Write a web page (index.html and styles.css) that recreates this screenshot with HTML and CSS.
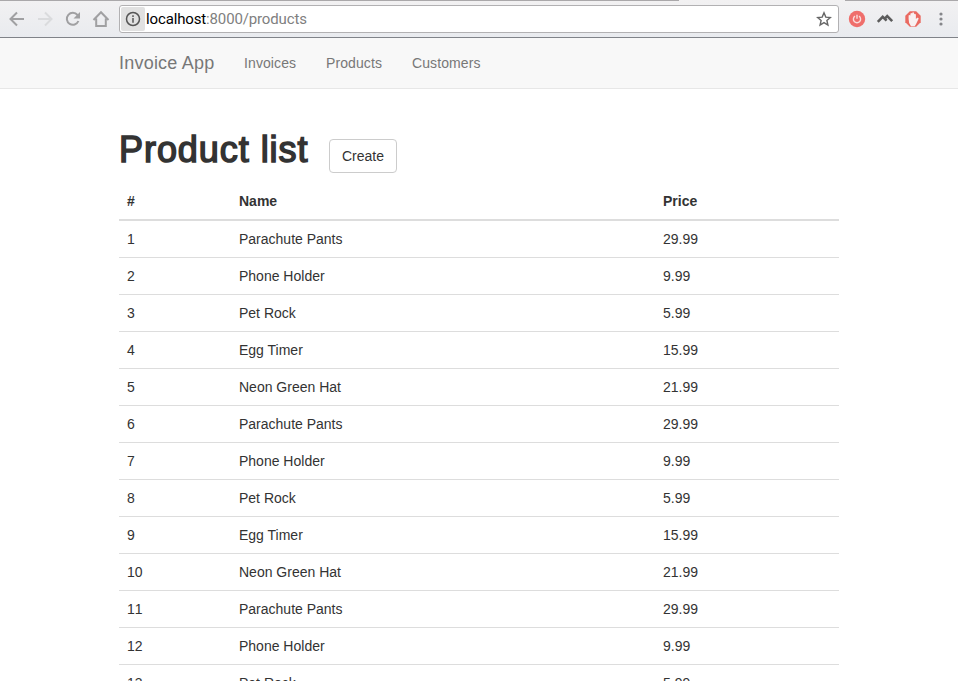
FILE: index.html
```html
<!DOCTYPE html>
<html lang="en">
<head>
<meta charset="utf-8">
<title>Invoice App</title>
<link rel="stylesheet" href="styles.css">
</head>
<body>
<div class="browser">
  <div class="tab-edge"><span class="edge-left"></span><span class="edge-right"></span></div>
  <div class="toolbar">
    <svg class="tool" viewBox="0 0 18 18"><path d="M16 9H3M9 2.500L2.500 9L9 15.500" /></svg>
    <svg class="tool tool-off" viewBox="0 0 18 18"><path d="M2 9H15M9 2.500L15.500 9L9 15.500" /></svg>
    <svg class="tool" viewBox="0 0 18 18"><path d="M14.400 11A6 6 0 1 1 13.500 5L15 6.600" /><path class="solid" d="M16 2V8.500H9.500Z" /></svg>
    <svg class="tool" viewBox="0 0 18 18"><path d="M1.500 10L9 2.300L16.500 10M4.200 8.500V16H13.800V8.500" /></svg>
    <div class="address">
      <span class="info"><svg viewBox="0 0 16 16"><circle cx="8" cy="8" r="6.500" /><path d="M8 7V11.700M8 4.300V5.900" /></svg></span>
      <span class="url">localhost<span class="path">:8000/products</span></span>
      <svg class="star" viewBox="0 0 16 16"><path d="M8 1.800L9.800 6.100L14.300 6.500L10.900 9.500L11.900 14L8 11.600L4.100 14L5.100 9.500L1.700 6.500L6.200 6.100Z" /></svg>
    </div>
    <svg class="ext" viewBox="0 0 18 18"><circle cx="9" cy="9" r="8.200" fill="#ef6e6b" /><path d="M7 6.200A3.600 3.600 0 1 0 11 6.200M9 4.800V8.800" fill="none" stroke="#fbdcdb" stroke-width="1.400" /></svg>
    <svg class="ext" viewBox="0 0 18 18"><path d="M1.800 11.800L6.700 6.800L10.600 10.700M7.800 9.600L11.200 6.200L16.200 11.200" fill="none" stroke="#5c5c5c" stroke-width="2.600" /></svg>
    <svg class="ext" viewBox="0 0 18 18"><path d="M5.800 1.300H12.200L16.700 5.800V12.200L12.200 16.700H5.800L1.300 12.200V5.800Z" fill="#ea6a61" /><path d="M4.600 9V5.500Q5.500 4.300 6.400 5.500V3.700Q7.300 2.400 8.200 3.500V2.900Q9.200 1.700 10.100 3.100V4.200Q11.200 3.300 11.900 4.700V9L13.200 7.800Q14.700 7.400 14.600 8.800L12 14.300L10.700 16.200H7Q4.500 13.500 4.600 9Z" fill="#f8f1f1" /></svg>
    <svg class="menu" viewBox="0 0 6 18"><circle cx="3" cy="4" r="1.600" /><circle cx="3" cy="9" r="1.600" /><circle cx="3" cy="14" r="1.600" /></svg>
  </div>
</div>
<nav class="navbar">
  <a class="brand">Invoice App</a>
  <a class="link invoices">Invoices</a>
  <a class="link products">Products</a>
  <a class="link">Customers</a>
</nav>
<main class="container">
  <header class="heading"><h1>Product list</h1><button class="create">Create</button></header>
  <table>
    <colgroup><col class="col-id"><col class="col-name"><col></colgroup>
    <thead><tr><th>#</th><th>Name</th><th>Price</th></tr></thead>
    <tbody>
      <tr><td>1</td><td>Parachute Pants</td><td>29.99</td></tr>
      <tr><td>2</td><td>Phone Holder</td><td>9.99</td></tr>
      <tr><td>3</td><td>Pet Rock</td><td>5.99</td></tr>
      <tr><td>4</td><td>Egg Timer</td><td>15.99</td></tr>
      <tr><td>5</td><td>Neon Green Hat</td><td>21.99</td></tr>
      <tr><td>6</td><td>Parachute Pants</td><td>29.99</td></tr>
      <tr><td>7</td><td>Phone Holder</td><td>9.99</td></tr>
      <tr><td>8</td><td>Pet Rock</td><td>5.99</td></tr>
      <tr><td>9</td><td>Egg Timer</td><td>15.99</td></tr>
      <tr><td>10</td><td>Neon Green Hat</td><td>21.99</td></tr>
      <tr><td>11</td><td>Parachute Pants</td><td>29.99</td></tr>
      <tr><td>12</td><td>Phone Holder</td><td>9.99</td></tr>
      <tr><td>13</td><td>Pet Rock</td><td>5.99</td></tr>
    </tbody>
  </table>
</main>
</body>
</html>
```
FILE: styles.css
```css
* { box-sizing: border-box; }
body {
  margin: 0;
  height: 681px;
  overflow: hidden;
  background: #fff;
  color: #333;
  font: 14px/20px "Liberation Sans", Arial, sans-serif;
}
.browser {
  height: 38px;
  background: linear-gradient(#f2f1f2, #e9ebef);
  border-bottom: 1px solid #808389;
}
.tab-edge { display: flex; justify-content: space-between; height: 1px; }
.edge-left { width: 679px; background: #aaa8aa; }
.edge-right { width: 113px; background: #aaa8aa; }
.toolbar { display: flex; align-items: center; height: 36px; padding-left: 8px; }
.tool {
  flex: none;
  width: 18px;
  height: 18px;
  margin-right: 10px;
  fill: none;
  stroke: #a0a0a2;
  stroke-width: 2;
}
.tool .solid { fill: #a0a0a2; stroke: none; }
.tool-off { stroke: #dadbdd; }
.address {
  display: flex;
  align-items: center;
  width: 720px;
  height: 28px;
  margin-left: -1px;
  margin-right: 9px;
  padding: 1px;
  background: #fff;
  border: 1px solid #b2b1b3;
  border-radius: 3px;
}
.info {
  display: flex;
  align-items: center;
  justify-content: center;
  width: 24px;
  height: 24px;
  background: #e1e1e1;
  border-radius: 2px;
}
.info svg { width: 16px; height: 16px; fill: none; stroke: #555; stroke-width: 1.5; }
.url {
  flex: 1;
  margin-left: 1px;
  color: #000;
  font: 15px/20px Roboto, sans-serif;
  letter-spacing: -0.14px;
  white-space: nowrap;
}
.path { color: #808080; }
.star { width: 16px; height: 16px; margin-right: 5px; fill: none; stroke: #666; stroke-width: 1.4; }
.ext { flex: none; width: 18px; height: 18px; margin-right: 10px; }
.menu { flex: none; width: 6px; height: 18px; margin-left: 6px; fill: #85868a; }
.navbar {
  display: flex;
  height: 51px;
  padding: 15px 0 0 119px;
  background: #f8f8f8;
  border-bottom: 1px solid #e7e7e7;
  color: #777;
}
.brand { width: 125px; font-size: 18px; letter-spacing: 0.22px; }
.link { letter-spacing: 0.1px; }
.link.invoices { width: 82px; }
.link.products { width: 86px; }
.container { width: 720px; margin-left: 119px; padding-top: 41px; }
.heading { display: flex; height: 53px; }
h1 {
  width: 210px;
  margin: 0;
  font-size: 36px;
  line-height: 40px;
  font-weight: 400;
  letter-spacing: 0.95px;
  white-space: nowrap;
  -webkit-text-stroke: 1.5px #333;
}
.create {
  width: 68px;
  height: 34px;
  margin-top: 9px;
  padding: 0;
  background: #fff;
  border: 1px solid #ccc;
  border-radius: 4px;
  color: #333;
  font: 14px/20px "Liberation Sans", Arial, sans-serif;
}
table { width: 100%; table-layout: fixed; border-collapse: separate; border-spacing: 0; }
.col-id { width: 112px; }
.col-name { width: 424px; }
th, td { padding: 8px; text-align: left; }
th { height: 38px; border-bottom: 2px solid #ddd; }
td { height: 37px; border-bottom: 1px solid #ddd; }
td:first-child { font-kerning: none; }
```
